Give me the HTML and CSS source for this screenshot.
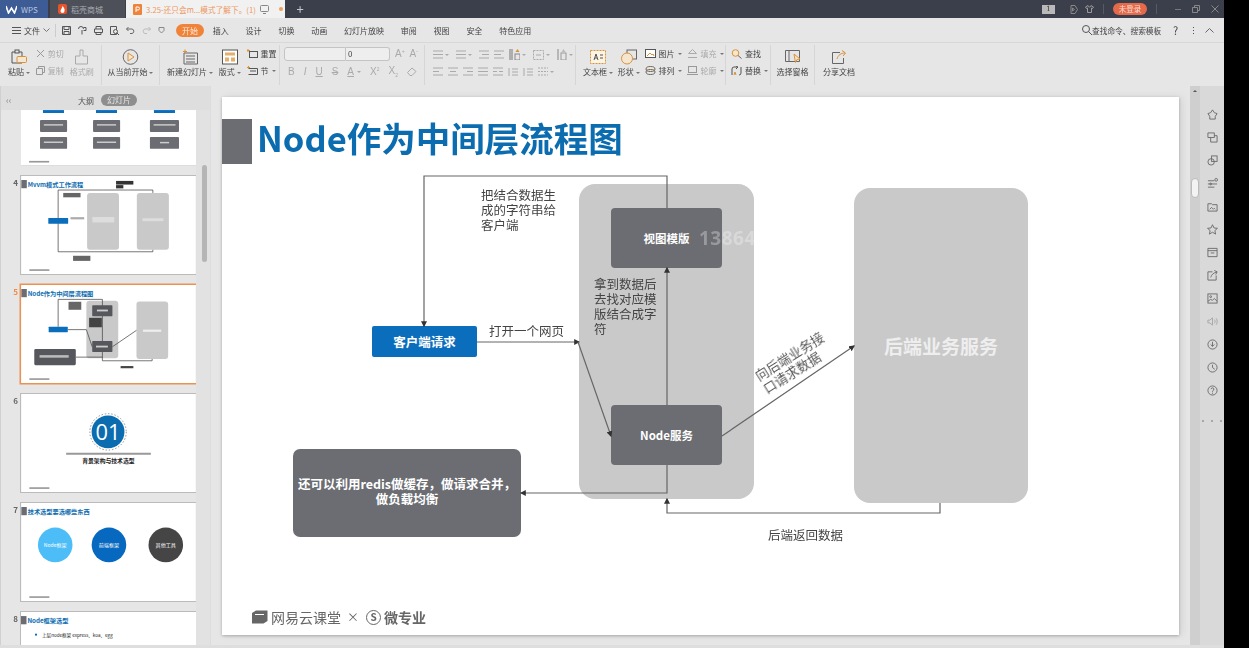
FILE: index.html
```html
<!DOCTYPE html>
<html lang="zh-CN">
<head>
  <meta charset="UTF-8" />
  <title>WPS 演示</title>
  <link rel="stylesheet" href="styles.css">
</head>
<body>
<div class="app">

  <!-- title bar -->
  <header class="titlebar">
    <div class="tab tab-wps">
      <svg width="11" height="9" viewBox="0 0 11 9"><path d="M0 1l2.500 7 3-5 3 5L11 1" fill="none" stroke="#fff" stroke-width="1.600"/></svg>
      <span>WPS</span>
    </div>
    <div class="tab tab-shop">
      <svg width="9" height="10" viewBox="0 0 9 10"><rect width="9" height="10" rx="2" fill="#e8542a"/><path d="M4.500 2C6 4 7 5 6.500 7a2 2 0 0 1-4 0C2.500 5.500 4 4.500 4.500 2z" fill="#fff"/></svg>
      <span>稻壳商城</span>
    </div>
    <div class="tab tab-doc">
      <svg width="9" height="11" viewBox="0 0 9 11"><rect width="9" height="11" rx="1" fill="#f0833a"/><path d="M3 8V3h2a1.300 1.300 0 0 1 0 3H3" fill="none" stroke="#fff"/></svg>
      <span class="doc-name">3.25-还只会m...模式了解下。(1)</span>
      <svg width="9" height="9" viewBox="0 0 9 9"><rect x=".5" y=".5" width="8" height="6" rx="1" fill="none" stroke="#888"/><path d="M3 8.500h3" stroke="#888"/></svg>
      <i class="doc-dot"></i>
    </div>
    <div class="tab-add">+</div>
    <div class="title-right">
      <span class="win-count">1</span>
      <svg class="tr-skin" width="8" height="9" viewBox="0 0 8 9"><path d="M1 .5h4l2.500 4L5 8.500H1zM2.500 3l2 1.500-2 1.500z" fill="none" stroke="#888"/></svg>
      <svg class="tr-shirt" width="9" height="8" viewBox="0 0 9 8"><path d="M3 .5L.5 2l1 1.500 1-.5v4.500h4V3l1 .5L8.500 2 6 .5a1.500 1.500 0 0 1-3 0z" fill="none" stroke="#999"/></svg>
      <i class="tr-sep"></i>
      <span class="login">未登录</span>
      <i class="tr-sep"></i>
      <i class="win-min"></i>
      <svg class="win-max" width="8" height="8" viewBox="0 0 8 8"><path d="M.5 2.500h5v5h-5zM2.500 2.500v-2h5v5h-2" fill="none" stroke="#888"/></svg>
      <svg class="win-close" width="8" height="8" viewBox="0 0 8 8"><path d="M.5.5l7 7M7.500.5l-7 7" stroke="#888"/></svg>
    </div>
  </header>

  <!-- menu bar -->
  <nav class="menubar">
    <div class="file-menu">
      <svg width="9" height="7" viewBox="0 0 9 7"><path d="M0 .5h9M0 3.500h9M0 6.500h9" stroke="#555"/></svg>
      <span>文件</span>
      <svg width="7" height="4" viewBox="0 0 7 4"><path d="M.5.5l3 3 3-3" fill="none" stroke="#777"/></svg>
    </div>
    <div class="quick">
      <svg width="9" height="9" viewBox="0 0 9 9"><path d="M.5.5h8v8h-8zM2 .5v3h5v-3M2 8.500v-3h5v3" fill="none" stroke="#555"/></svg>
      <svg width="9" height="9" viewBox="0 0 9 9"><path d="M.5 3a2.500 2.500 0 0 1 5 0M5.500 1.500h2.500v3H5.500M4 4v4.500" fill="none" stroke="#555"/></svg>
      <svg width="9" height="9" viewBox="0 0 9 9"><path d="M2 3V.5h5V3M.5 3h8v3.500h-8zM2 6v2.500h5V6" fill="none" stroke="#555"/></svg>
      <svg width="9" height="9" viewBox="0 0 9 9"><path d="M.5.5h6v8h-6z" fill="none" stroke="#555"/><circle cx="5.500" cy="5.500" r="2" fill="#e6e6e6" stroke="#555"/><path d="M7 7l2 2" stroke="#555"/></svg>
      <svg width="9" height="8" viewBox="0 0 9 8"><path d="M2.500 1L.5 3l2 2M.5 3H6a2.300 2.300 0 0 1 0 4.500H4" fill="none" stroke="#666"/></svg>
      <svg width="9" height="8" viewBox="0 0 9 8"><path d="M6.500 1l2 2-2 2M8.500 3H3a2.300 2.300 0 0 0 0 4.500h2" fill="none" stroke="#bbb"/></svg>
      <svg width="7" height="7" viewBox="0 0 7 7"><path d="M1 .5h5v3L3.500 6 1 3.500z" fill="none" stroke="#888"/></svg>
    </div>
    <ul class="menu-items">
      <li class="menu-on">开始</li>
      <li>插入</li>
      <li>设计</li>
      <li>切换</li>
      <li>动画</li>
      <li>幻灯片放映</li>
      <li>审阅</li>
      <li>视图</li>
      <li>安全</li>
      <li>特色应用</li>
    </ul>
    <div class="menu-right">
      <svg width="10" height="10" viewBox="0 0 10 10"><circle cx="4" cy="4" r="3.500" fill="none" stroke="#555"/><path d="M6.500 6.500L10 10" stroke="#555"/></svg>
      <span class="cmd-search">查找命令、搜索模板</span>
      <span class="help">?</span>
      <span class="more">⋮</span>
      <svg width="9" height="5" viewBox="0 0 9 5"><path d="M.5 4.500l4-4 4 4" fill="none" stroke="#666"/></svg>
    </div>
  </nav>

  <!-- ribbon -->
  <section class="ribbon">
    <div class="rgroup g-clip">
      <div class="big">
        <svg width="16" height="15" viewBox="0 0 16 15"><path d="M1 2.500h10v11H1z" fill="none" stroke="#555"/><rect x="4" y=".5" width="4" height="3" fill="#e6e6e6" stroke="#555"/><rect x="6" y="7" width="9.500" height="6" rx="1" fill="#f5e6cf" stroke="#d9913c"/></svg>
        <span>粘贴 <b class="caret"></b></span>
      </div>
      <div class="small-col dim">
        <span class="small-row"><svg width="9" height="9" viewBox="0 0 9 9"><path d="M1 1l7 7M8 1L1 8" stroke="#999"/></svg>剪切</span>
        <span class="small-row"><svg width="9" height="9" viewBox="0 0 9 9"><path d="M.5 2.500h6v6h-6zM2.500 2.500v-2h6v6h-2" fill="none" stroke="#999"/></svg>复制</span>
      </div>
      <div class="big dim">
        <svg width="15" height="15" viewBox="0 0 15 15"><path d="M6 .5h3v6h4.500v8h-12v-8H6z" fill="none" stroke="#aaa"/></svg>
        <span>格式刷</span>
      </div>
    </div>

    <div class="rgroup g-play">
      <div class="big">
        <svg width="17" height="16" viewBox="0 0 17 16"><circle cx="8.500" cy="8" r="7.300" fill="none" stroke="#666"/><path d="M6 4l6 4-6 4z" fill="#f5e6cf" stroke="#d9913c"/></svg>
        <span>从当前开始 <b class="caret"></b></span>
      </div>
    </div>

    <div class="rgroup g-slide">
      <div class="big">
        <svg width="16" height="15" viewBox="0 0 16 15"><path d="M2 3.500h13.500v11H2zM4 6.500h9M4 9.500h9M4 12.500h9" fill="none" stroke="#666"/><path d="M3 0v4M1 2h4" stroke="#d9913c"/></svg>
        <span>新建幻灯片 <b class="caret"></b></span>
      </div>
      <div class="big">
        <svg width="16" height="15" viewBox="0 0 16 15"><rect x=".5" y=".5" width="15" height="14" fill="#fff" stroke="#555"/><rect x="3" y="3" width="10" height="3" fill="#e2b06c"/><rect x="3" y="8" width="4" height="4" fill="#e2b06c"/><rect x="9" y="8" width="4" height="4" fill="#e2b06c"/></svg>
        <span>版式 <b class="caret"></b></span>
      </div>
      <div class="small-col">
        <span class="small-row"><svg width="11" height="9" viewBox="0 0 11 9"><rect x="2.500" y="2.500" width="8" height="6" fill="none" stroke="#555"/><path d="M1 0v3M0 1.500h3" stroke="#d9913c"/></svg>重置</span>
        <span class="small-row"><svg width="11" height="9" viewBox="0 0 11 9"><path d="M1.500 2.500h9v6h-9M3 5h6" fill="none" stroke="#555"/><path d="M1.500 0v3M0 1.500h3" stroke="#d9913c"/></svg>节 <b class="caret"></b></span>
      </div>
    </div>

    <div class="rgroup g-font">
      <div class="font-row">
        <span class="fbox f-name"></span><span class="fbox f-size">0</span>
        <span class="font-a">A<sup>+</sup></span><span class="font-a">A<sup>-</sup></span>
      </div>
      <div class="font-row fmt">
        <b>B</b><i>I</i><u>U</u><s>S</s><span class="fmt-a">A</span><b class="caret"></b>
        <span>X<sup>2</sup></span><span>X<sub>2</sub></span>
        <svg width="10" height="9" viewBox="0 0 10 9"><path d="M.5 5.500L5 1l4 3.500-4 4H3z" fill="none" stroke="#aaa"/></svg>
      </div>
    </div>

    <div class="rgroup g-para">
      <div class="para-row">
        <svg width="10" height="9" viewBox="0 0 10 9"><path d="M0 1h10M0 4.500h10M0 8h10" stroke="#aaa"/></svg><b class="caret"></b>
        <svg width="10" height="9" viewBox="0 0 10 9"><path d="M0 1h10M0 4.500h10M0 8h10" stroke="#aaa"/></svg><b class="caret"></b>
        <svg width="10" height="9" viewBox="0 0 10 9"><path d="M0 1h10M3 4.500h7M0 8h10" stroke="#aaa"/></svg>
        <svg width="10" height="9" viewBox="0 0 10 9"><path d="M0 1h10M0 4.500h7M0 8h10" stroke="#aaa"/></svg>
        <svg width="11" height="11" viewBox="0 0 11 11"><path d="M1 0v11M3 0v11" stroke="#777"/><rect x="6" y="5" width="5" height="6" fill="none" stroke="#888"/><path d="M8.500 0l2 3h-4z" fill="#d9913c"/></svg><b class="caret"></b>
        <svg width="11" height="10" viewBox="0 0 11 10"><rect x=".5" y=".5" width="10" height="9" fill="none" stroke="#aaa" stroke-dasharray="2 1"/><path d="M3 5h5" stroke="#aaa"/></svg><b class="caret"></b>
        <svg width="10" height="11" viewBox="0 0 10 11"><path d="M1 0v11" stroke="#888"/><rect x="4" y="4" width="5" height="7" fill="none" stroke="#999"/><path d="M6.500 0l2 3h-4z" fill="#bbb"/></svg><b class="caret"></b>
      </div>
      <div class="para-row">
        <svg width="10" height="9" viewBox="0 0 10 9"><path d="M0 1h10M0 4.500h6M0 8h10" stroke="#aaa"/></svg>
        <svg width="10" height="9" viewBox="0 0 10 9"><path d="M0 1h10M2 4.500h6M0 8h10" stroke="#aaa"/></svg>
        <svg width="10" height="9" viewBox="0 0 10 9"><path d="M0 1h10M4 4.500h6M0 8h10" stroke="#aaa"/></svg>
        <svg width="10" height="9" viewBox="0 0 10 9"><path d="M0 1h10M0 4.500h10M0 8h10" stroke="#aaa"/></svg>
        <svg width="10" height="9" viewBox="0 0 10 9"><path d="M0 1h10M0 4.500h4M6 4.500h4M0 8h10" stroke="#aaa"/></svg>
        <svg width="10" height="10" viewBox="0 0 10 10"><path d="M1 1v8M4 2h6M4 5h6M4 8h6" stroke="#aaa"/></svg>
        <svg width="10" height="10" viewBox="0 0 10 10"><path d="M1 1v8M4 2h6M4 5h6M4 8h6" stroke="#aaa"/></svg>
        <svg width="10" height="9" viewBox="0 0 10 9"><path d="M0 1h10M0 4.500h10M0 8h10" stroke="#aaa" stroke-dasharray="2 1"/></svg><b class="caret"></b>
      </div>
    </div>

    <div class="rgroup g-draw">
      <div class="big">
        <svg width="16" height="14" viewBox="0 0 16 14"><rect x=".5" y=".5" width="15" height="13" fill="#fbf3e3" stroke="#d9913c" stroke-dasharray="2 1"/><path d="M4 10l2-6 2 6M5 8h2M10 5h3M10 8h3" fill="none" stroke="#555"/></svg>
        <span>文本框 <b class="caret"></b></span>
      </div>
      <div class="big">
        <svg width="16" height="15" viewBox="0 0 16 15"><rect x="6" y=".5" width="9.500" height="9" fill="none" stroke="#666"/><circle cx="6" cy="9" r="5.500" fill="#f5e6cf" stroke="#d9913c"/></svg>
        <span>形状 <b class="caret"></b></span>
      </div>
      <div class="small-col">
        <span class="small-row"><svg width="11" height="9" viewBox="0 0 11 9"><rect x=".5" y=".5" width="10" height="8" fill="#fff" stroke="#555"/><path d="M2 7l3-3 2 2 1-1 1 2" fill="none" stroke="#d9913c"/></svg>图片 <b class="caret"></b></span>
        <span class="small-row"><svg width="11" height="9" viewBox="0 0 11 9"><ellipse cx="5.500" cy="3" rx="4.500" ry="2.500" fill="#f5e6cf" stroke="#666"/><ellipse cx="5.500" cy="6" rx="4.500" ry="2.500" fill="none" stroke="#666"/></svg>排列 <b class="caret"></b></span>
      </div>
      <div class="small-col dim">
        <span class="small-row"><svg width="11" height="9" viewBox="0 0 11 9"><path d="M5.500.5l4 4h-8zM1 8.500h9" fill="none" stroke="#aaa"/></svg>填充 <b class="caret"></b></span>
        <span class="small-row"><svg width="11" height="9" viewBox="0 0 11 9"><rect x="1.500" y=".5" width="8" height="6" fill="none" stroke="#999"/><path d="M0 8.500h11" stroke="#999"/></svg>轮廓 <b class="caret"></b></span>
      </div>
    </div>

    <div class="rgroup g-find">
      <div class="small-col">
        <span class="small-row"><svg width="11" height="10" viewBox="0 0 11 10"><circle cx="4.500" cy="4" r="3.300" fill="#f5e6cf" stroke="#d9913c"/><path d="M7 6.500l3.500 3" stroke="#666"/></svg>查找</span>
        <span class="small-row"><svg width="11" height="10" viewBox="0 0 11 10"><path d="M1 9V3a2 2 0 0 1 2-2h3M5 0l2 1-2 2M10 1v6a2 2 0 0 1-2 2" fill="none" stroke="#555"/><path d="M3 9l1-3 1 3" fill="none" stroke="#d9913c"/></svg>替换 <b class="caret"></b></span>
      </div>
    </div>

    <div class="rgroup g-pane">
      <div class="big">
        <svg width="16" height="14" viewBox="0 0 16 14"><path d="M.5.500h14v11H.5zM4 .5v11" fill="none" stroke="#666"/><path d="M9 4l6 5-3 .5-1.500 3z" fill="#f5e6cf" stroke="#d9913c"/></svg>
        <span>选择窗格</span>
      </div>
    </div>

    <div class="rgroup g-share">
      <div class="big">
        <svg width="15" height="14" viewBox="0 0 15 14"><path d="M8 2.500H.5v11h11V8" fill="none" stroke="#666"/><path d="M5 9c1-4 4-6 8-6M10 .5L13.500 3 11 6" fill="none" stroke="#d9913c"/></svg>
        <span>分享文档</span>
      </div>
    </div>
  </section>

  <main class="workspace">

    <!-- slide list -->
    <aside class="sidebar">
      <div class="side-tabs">
        <span class="side-fold">‹‹</span>
        <span class="side-tab">大纲</span>
        <span class="side-tab side-tab-on">幻灯片</span>
      </div>
      <div class="side-body">
        <div class="thumbs">
          <div class="thumb-row">
            <span class="thumb-no"></span>
            <svg class="thumb thumb-cut" viewBox="0 238 957 300">
              <rect y="238" width="957" height="300" fill="#fff"/>
              <g fill="#0a6ebd"><rect x="120" y="238" width="115" height="16"/><rect x="410" y="238" width="115" height="16"/><rect x="727" y="238" width="115" height="16"/></g>
              <g fill="#6b6d72"><rect x="104" y="292" width="148" height="66" rx="5"/><rect x="394" y="292" width="148" height="66" rx="5"/><rect x="705" y="292" width="159" height="66" rx="5"/><rect x="104" y="385" width="148" height="65" rx="5"/><rect x="394" y="385" width="148" height="65" rx="5"/><rect x="705" y="385" width="159" height="65" rx="5"/></g>
              <g fill="#ccc"><rect x="125" y="315" width="105" height="8"/><rect x="415" y="315" width="105" height="8"/><rect x="725" y="315" width="120" height="8"/><rect x="125" y="410" width="105" height="8"/><rect x="415" y="410" width="105" height="8"/><rect x="760" y="412" width="50" height="8"/></g>
              <rect x="44" y="516" width="110" height="9" fill="#999"/>
            </svg>
          </div>
          <div class="thumb-row">
            <span class="thumb-no">4</span>
            <svg class="thumb" viewBox="0 0 957 538">
              <rect width="957" height="538" fill="#fff"/>
              <rect y="22" width="30" height="45" fill="#6b6d72"/>
              <text x="35" y="58" class="t-title">Mvvm模式工作流程</text>
              <rect x="361" y="93" width="175" height="312" rx="16" fill="#c9c9c9"/>
              <rect x="634" y="93" width="176" height="312" rx="16" fill="#c9c9c9"/>
              <path d="M449 77H202V416H722V405M449 77H722V93" fill="none" stroke="#444" stroke-width="4"/>
              <rect x="148" y="230" width="109" height="32" rx="3" fill="#0a6ebd"/>
              <path d="M270 232h75" stroke="#aaa" stroke-width="12"/>
              <rect x="520" y="27" width="95" height="20" fill="#333"/>
              <rect x="520" y="50" width="40" height="18" fill="#333"/>
              <rect x="230" y="93" width="95" height="24" fill="#666"/>
              <rect x="284" y="438" width="95" height="28" fill="#666"/>
              <rect x="44" y="512" width="110" height="9" fill="#999"/>
              <rect x="390" y="225" width="120" height="30" fill="#ddd"/>
              <rect x="665" y="232" width="115" height="16" fill="#ddd"/>
            </svg>
          </div>
          <div class="thumb-row">
            <span class="thumb-no thumb-no-on">5</span>
            <svg class="thumb thumb-on" viewBox="0 0 957 538">
              <rect width="957" height="538" fill="#fff"/>
              <rect y="22" width="30" height="45" fill="#6b6d72"/>
              <text x="35" y="58" class="t-title">Node作为中间层流程图</text>
              <rect x="357" y="87" width="175" height="315" rx="16" fill="#c9c9c9"/>
              <rect x="632" y="91" width="174" height="315" rx="16" fill="#c9c9c9"/>
              <path d="M445 79H202V229M445 79V396M255 245H357L389 339M500 339L632 249M299 396H445V416H718V406" fill="none" stroke="#444" stroke-width="4"/>
              <rect x="389" y="111" width="111" height="60" rx="4" fill="#55575c"/>
              <rect x="389" y="308" width="111" height="60" rx="4" fill="#55575c"/>
              <rect x="150" y="229" width="105" height="31" rx="3" fill="#0a6ebd"/>
              <rect x="71" y="352" width="228" height="88" rx="7" fill="#55575c"/>
              <rect x="259" y="92" width="70" height="44" fill="#666"/>
              <rect x="372" y="180" width="70" height="52" fill="#444"/>
              <rect x="545" y="445" width="70" height="12" fill="#444"/>
              <rect x="100" y="385" width="160" height="14" fill="#bbb"/>
              <rect x="415" y="135" width="60" height="10" fill="#ccc"/>
              <rect x="410" y="333" width="65" height="10" fill="#ccc"/>
              <rect x="668" y="245" width="100" height="12" fill="#eee"/>
              <rect x="44" y="512" width="110" height="9" fill="#999"/>
            </svg>
          </div>
          <div class="thumb-row">
            <span class="thumb-no">6</span>
            <svg class="thumb" viewBox="0 0 957 538">
              <rect width="957" height="538" fill="#fff"/>
              <circle cx="476" cy="208" r="100" fill="none" stroke="#888" stroke-width="5" stroke-dasharray="8 10"/>
              <circle cx="476" cy="208" r="90" fill="#0b6cb0"/>
              <text x="476" y="250" class="t-num">01</text>
              <path d="M246 328H711" stroke="#999" stroke-width="10"/>
              <text x="478" y="378" class="t-sub">背景架构与技术选型</text>
              <rect x="44" y="512" width="110" height="9" fill="#999"/>
            </svg>
          </div>
          <div class="thumb-row">
            <span class="thumb-no">7</span>
            <svg class="thumb" viewBox="0 0 957 538">
              <rect width="957" height="538" fill="#fff"/>
              <rect y="22" width="30" height="45" fill="#6b6d72"/>
              <text x="35" y="58" class="t-title">技术选型要选哪些东西</text>
              <circle cx="186" cy="230" r="95" fill="#4dbdf7"/>
              <circle cx="481" cy="230" r="95" fill="#0668bf"/>
              <circle cx="793" cy="230" r="95" fill="#454545"/>
              <text x="186" y="243" class="t-in">Node框架</text>
              <text x="481" y="243" class="t-in">前端框架</text>
              <text x="793" y="243" class="t-in">其他工具</text>
              <rect x="44" y="512" width="110" height="9" fill="#999"/>
            </svg>
          </div>
          <div class="thumb-row">
            <span class="thumb-no">8</span>
            <svg class="thumb thumb-cut8" viewBox="0 0 957 180">
              <rect width="957" height="180" fill="#fff"/>
              <rect y="22" width="30" height="45" fill="#6b6d72"/>
              <text x="35" y="58" class="t-title">Node框架选型</text>
              <text x="115" y="135" class="t-line">上层node框架 express、koa、egg</text>
              <circle cx="82" cy="124" r="6" fill="#0b6cb0"/>
            </svg>
          </div>
        </div>
        <div class="side-scroll"><i class="side-thumb"></i></div>
      </div>
    </aside>

    <!-- slide canvas -->
    <section class="canvas">
      <article class="slide">
        <div class="slide-mark"></div>
        <h1 class="slide-title">Node作为中间层流程图</h1>

        <div class="node group-box mid-box"></div>
        <div class="node group-box back-box">后端业务服务</div>
        <div class="node dark-box view-box">视图模版</div>
        <div class="node dark-box node-box">Node服务</div>
        <div class="node client-box">客户端请求</div>
        <div class="node dark-box redis-box">还可以利用redis做缓存，做请求合并，<br>做负载均衡</div>

        <svg class="wires" width="957" height="538" viewBox="0 0 957 538">
          <defs>
            <marker id="tip" markerWidth="5" markerHeight="5" refX="4" refY="2.500" orient="auto"><path d="M0 0l5 2.500L0 5z" fill="#333"/></marker>
          </defs>
          <g fill="none" stroke="#666" stroke-width="1.200">
            <path d="M445 111V79H202V229" marker-end="url(#tip)"/>
            <path d="M445 308V171" marker-end="url(#tip)"/>
            <path d="M445 368V396H299" marker-end="url(#tip)"/>
            <path d="M255 245H357" marker-end="url(#tip)"/>
            <path d="M356 245L389 339" marker-end="url(#tip)"/>
            <path d="M500 339L632 249" marker-end="url(#tip)"/>
            <path d="M718 406V416H445V402" marker-end="url(#tip)"/>
          </g>
        </svg>

        <p class="note note-render">把结合数据生<br>成的字符串给<br>客户端</p>
        <p class="note note-open">打开一个网页</p>
        <p class="note note-find">拿到数据后<br>去找对应模<br>版结合成字<br>符</p>
        <p class="note note-back">后端返回数据</p>
        <p class="note note-api">向后端业务接<br>口请求数据</p>
        <span class="watermark">13864</span>

        <footer class="slide-logo">
          <svg width="17" height="14" viewBox="0 0 17 14"><path d="M1 3l4-2.500h11.500V11l-4 2.500H1z" fill="#666"/><path d="M4 4.500h9" stroke="#fff"/></svg>
          <span class="logo-cn">网易云课堂</span>
          <span class="logo-x">×</span>
          <span class="logo-s">S</span>
          <span class="logo-micro">微专业</span>
        </footer>
      </article>
      <div class="canvas-scroll"><i class="canvas-up"></i><i class="canvas-thumb"></i></div>
    </section>

    <!-- right rail -->
    <aside class="rail">
      <svg viewBox="0 0 12 12"><path d="M6 1l2 3 3 1-2 3v3H3V8L1 5l3-1z"/></svg>
      <svg viewBox="0 0 12 12"><path d="M1 1h7v5H1zM4 6v5h7V4H8"/></svg>
      <svg viewBox="0 0 12 12"><rect x="5" y="1" width="6" height="6"/><circle cx="4.500" cy="7.500" r="3.500"/></svg>
      <svg viewBox="0 0 12 12"><path d="M1 3h7M1 6.500h10M1 10h7"/><circle cx="10" cy="2" r="1.500"/><circle cx="4" cy="6.500" r="1"/></svg>
      <svg viewBox="0 0 12 12"><path d="M1 3h4l1 1h5v7H1zM3 9l2-2 2 2 1-1 1 1"/></svg>
      <svg viewBox="0 0 12 12"><path d="M6 .8l1.600 3.500 3.800.4-2.800 2.500.8 3.800L6 9l-3.400 2 .8-3.800L.6 4.700l3.800-.4z"/></svg>
      <svg viewBox="0 0 12 12"><path d="M1 1.500h10v9H1zM1 4h10M4 6.500h4"/></svg>
      <svg viewBox="0 0 12 12"><path d="M6 2H1v9h9V6M4 8c1-3 3-5 7-6M8 .5L11 2 9.500 5"/></svg>
      <svg viewBox="0 0 12 12"><rect x="1" y="1" width="10" height="10"/><circle cx="4" cy="4" r="1"/><path d="M1 9l3-2 2 1 2-2 3 3"/></svg>
      <svg class="rail-dim" viewBox="0 0 12 12"><path d="M1 4.500h2L6 2v8L3 7.500H1zM8 4c1 1 1 3 0 4M10 2.500c1.500 2 1.500 5 0 7"/></svg>
      <svg viewBox="0 0 12 12"><circle cx="6" cy="6" r="5"/><path d="M6 3v5M4 6l2 2 2-2"/></svg>
      <svg viewBox="0 0 12 12"><circle cx="6" cy="6" r="5"/><path d="M6 3v3l2.500 2"/></svg>
      <svg viewBox="0 0 12 12"><circle cx="6" cy="6" r="5"/><path d="M4.500 4.500a1.500 1.500 0 1 1 2 1.500L6 7v1M6 9v1"/></svg>
      <span class="rail-more">···</span>
    </aside>

  </main>
  <div class="statusbar"></div>
</div>
</body>
</html>
```

FILE: styles.css
```css
* {
  margin: 0;
  padding: 0;
  box-sizing: border-box;
}
html, body {
  width: 1249px;
  height: 648px;
  overflow: hidden;
  background: #000;
}
body {
  font-family: "Noto Sans CJK SC", "Liberation Sans", sans-serif;
  color: #444;
}
ul { list-style: none; }
.app {
  width: 1224px;
  height: 648px;
  display: flex;
  flex-direction: column;
  background: #e6e6e6;
  filter: blur(.6px);
}

/* title bar */
.titlebar {
  height: 18px;
  flex: none;
  display: flex;
  align-items: stretch;
  background: #3a3f4b;
  font-size: 8px;
}
.tab {
  display: flex;
  align-items: center;
  gap: 4px;
}
.tab-wps {
  width: 48px;
  padding-left: 6px;
  background: #3d5c96;
  color: #b9c6de;
}
.tab-shop {
  width: 75px;
  margin-left: 2px;
  padding-left: 8px;
  background: #4d5059;
  color: #a9abb1;
}
.tab-doc {
  width: 159px;
  margin-left: 1px;
  padding-left: 7px;
  background: #f1f1f1;
  color: #ee9760;
  font-size: 7.700px;
}
.doc-name { white-space: nowrap; }
.doc-dot {
  width: 4px;
  height: 4px;
  margin-left: 6px;
  border-radius: 50%;
  background: #f0a05a;
}
.tab-add {
  width: 30px;
  text-align: center;
  color: #c5c7cc;
  font-size: 13px;
  line-height: 17px;
}
.title-right {
  margin-left: auto;
  display: flex;
  align-items: center;
  padding-right: 5px;
}
.win-count {
  width: 13px;
  height: 9px;
  background: #b9b9b9;
  color: #333;
  font-family: "DejaVu Serif", serif;
  font-size: 7px;
  line-height: 9px;
  text-align: center;
}
.tr-skin { margin-left: 15px; }
.tr-shirt { margin-left: 7px; }
.tr-sep {
  width: 1px;
  height: 10px;
  margin: 0 9px;
  background: #555a66;
}
.login {
  width: 34px;
  height: 12px;
  border-radius: 6px;
  background: #e46a4a;
  color: #f8ddd3;
  font-size: 7.500px;
  line-height: 12px;
  text-align: center;
}
.win-min {
  width: 6px;
  height: 1px;
  margin-left: 9px;
  background: #777;
}
.win-max { margin-left: 11px; }
.win-close { margin-left: 11px; }

/* menu bar */
.menubar {
  height: 25px;
  flex: none;
  display: flex;
  align-items: center;
  border-bottom: 1px solid #d8d8d8;
  font-size: 8px;
}
.file-menu {
  width: 56px;
  padding-left: 12px;
  display: flex;
  align-items: center;
  gap: 3px;
  border-right: 1px solid #ccc;
  height: 13px;
}
.quick {
  width: 120px;
  padding-left: 6px;
  display: flex;
  align-items: center;
  gap: 7px;
}
.menu-items {
  display: flex;
  align-items: center;
  gap: 16.800px;
}
.menu-on {
  width: 28px;
  height: 13px;
  margin-right: -8px;
  border-radius: 7px;
  background: #f0833a;
  color: #fbe9dc;
  line-height: 13px;
  text-align: center;
}
.menu-right {
  margin-left: auto;
  padding-right: 10px;
  display: flex;
  align-items: center;
}
.cmd-search { width: 70px; white-space: nowrap; font-size: 7.700px; }
.help {
  width: 6px;
  margin-left: 11px;
  font-size: 11px;
}
.more {
  width: 6px;
  margin-left: 10px;
  margin-right: 10px;
  font-size: 9px;
  text-align: center;
}

/* ribbon */
.ribbon {
  height: 43px;
  flex: none;
  display: flex;
  padding-top: 2px;
  font-size: 8px;
}
.rgroup {
  height: 40px;
  display: flex;
  border-right: 1px solid #d6d6d6;
}
.big {
  display: flex;
  flex-direction: column;
  align-items: center;
  white-space: nowrap;
  padding-top: 4px;
  gap: 2px;
  height: 38px;
  justify-content: flex-start;
}
.big > svg { height: 16px; flex: none; }
.big > span { line-height: 10px; }
.small-col {
  display: flex;
  flex-direction: column;
  gap: 6px;
  padding-top: 3px;
}
.small-row {
  display: flex;
  align-items: center;
  gap: 3px;
  height: 11px;
  white-space: nowrap;
}
.dim { color: #aaa; }
.caret {
  display: inline-block;
  width: 0;
  height: 0;
  border: 2px solid transparent;
  border-top-color: #777;
  border-bottom-width: 0;
  vertical-align: middle;
}
.g-clip { width: 102px; padding-left: 8px; gap: 6px; }
.g-play { width: 58px; justify-content: center; }
.g-slide { width: 120px; padding-left: 7px; gap: 6px; }
.g-font { width: 145px; padding: 2px 4px 0 4px; flex-direction: column; gap: 4px; }
.g-para { width: 151px; padding: 4px 0 0 8px; flex-direction: column; gap: 6px; }
.g-draw { width: 150px; padding-left: 7px; gap: 5px; }
.g-find { width: 45px; padding-left: 5px; }
.g-pane { width: 44px; justify-content: center; }
.g-share { width: 48px; justify-content: center; border-right: 0; }
.font-row {
  display: flex;
  align-items: center;
  gap: 0;
}
.fbox {
  height: 14px;
  background: #eee;
  border: 1px solid #c4c4c4;
  font-size: 8px;
  line-height: 12px;
  padding-left: 2px;
}
.f-name { width: 62px; border-radius: 3px 0 0 3px; }
.f-size { width: 44px; border-left: 0; border-radius: 0 3px 3px 0; }
.font-a {
  margin-left: 5px;
  font-size: 10px;
  color: #aaa;
  font-family: "Liberation Sans", sans-serif;
}
.font-a sup { font-size: 5px; }
.fmt {
  gap: 9px;
  padding-left: 4px;
  color: #aaa;
  font-family: "Liberation Sans", sans-serif;
  font-size: 10px;
}
.fmt sup, .fmt sub { font-size: 5px; }
.fmt b { font-weight: 400; }
.fmt .caret { border-top-color: #aaa; margin-left: -6px; }
.fmt-a { text-decoration: underline; }
.para-row {
  display: flex;
  align-items: center;
  gap: 5px;
  height: 11px;
}
.para-row .caret { border-top-color: #aaa; margin-left: -3px; margin-right: 2px; }

/* main area */
.workspace {
  flex: 1;
  min-height: 0;
  display: flex;
}

/* slide list */
.sidebar {
  width: 211px;
  flex: none;
  display: flex;
  flex-direction: column;
  border-right: 1px solid #dcdcdc;
  border-left: 1px solid #d0d0d0;
}
.side-tabs {
  height: 24px;
  flex: none;
  display: flex;
  align-items: center;
  padding-top: 4px;
  background: #dedede;
  font-size: 8px;
}
.side-fold {
  width: 77px;
  padding-left: 5px;
  color: #888;
  font-size: 9px;
}
.side-tab { color: #555; }
.side-tab-on {
  width: 36px;
  height: 12px;
  margin-left: 7px;
  border-radius: 6px;
  background: #8e8e8e;
  color: #e6e6e6;
  line-height: 12px;
  text-align: center;
}
.side-body {
  flex: 1;
  min-height: 0;
  display: flex;
  overflow: hidden;
}
.thumbs {
  flex: 1;
  display: flex;
  flex-direction: column;
  gap: 11px;
}
.thumb-row {
  display: flex;
  align-items: flex-start;
}
.thumb-no {
  width: 20px;
  padding: 1px 3px 0 0;
  flex: none;
  text-align: right;
  font-size: 8px;
  font-weight: 700;
  color: #666;
}
.thumb-no-on { color: #ee8a4a; }
.thumb {
  display: block;
  width: 175px;
  height: 98px;
  flex: none;
  box-shadow: 0 0 0 1px #bbb;
}
.thumb-cut {
  height: 55px;
  box-shadow: 0 1px 0 #ddd;
}
.thumb-cut8 { height: 33px; }
.thumb-on { box-shadow: 0 0 0 1.500px #ec9152; }
.t-title {
  font-size: 34px;
  font-weight: 700;
  fill: #0b6cb0;
}
.t-num {
  font-size: 120px;
  fill: #fff;
  text-anchor: middle;
  font-family: "Open Sans", sans-serif;
}
.t-sub {
  font-size: 32px;
  font-weight: 700;
  fill: #222;
  text-anchor: middle;
}
.t-in {
  font-size: 28px;
  fill: #fff;
  text-anchor: middle;
}
.t-line {
  font-size: 25px;
  fill: #222;
}
.side-scroll {
  width: 14px;
  flex: none;
  background: #e2e2e2;
  padding: 55px 0 0 6px;
}
.side-thumb {
  display: block;
  width: 5px;
  height: 97px;
  border-radius: 3px;
  background: #b5b5b5;
}

/* slide canvas */
.canvas {
  flex: 1;
  position: relative;
  display: flex;
  justify-content: flex-end;
}
.slide {
  position: absolute;
  left: 11px;
  top: 11px;
  width: 957px;
  height: 538px;
  background: #fff;
  box-shadow: 0 1px 3px rgba(0, 0, 0, .25), 3px 0 8px rgba(0, 0, 0, .08);
}
.slide-mark {
  position: absolute;
  left: 0;
  top: 22px;
  width: 30px;
  height: 45px;
  background: #6b6d72;
}
.slide-title {
  position: absolute;
  left: 35px;
  top: 10px;
  font-size: 34.500px;
  line-height: 60px;
  font-weight: 700;
  color: #0b6cb0;
  white-space: nowrap;
}
.node {
  position: absolute;
  display: flex;
  align-items: center;
  justify-content: center;
  text-align: center;
  color: #fff;
  font-weight: 700;
  font-family: "Noto Sans CJK SC", serif;
}
.group-box {
  background: #c9c9c9;
  border-radius: 16px;
}
.dark-box {
  background: #6b6d72;
  border-radius: 4px;
  font-size: 11.500px;
}
.mid-box { left: 357px; top: 87px; width: 175px; height: 315px; }
.back-box {
  left: 632px;
  top: 91px;
  width: 174px;
  height: 315px;
  color: #eee;
  font-size: 19px;
}
.view-box { left: 389px; top: 111px; width: 111px; height: 60px; }
.node-box { left: 389px; top: 308px; width: 111px; height: 60px; }
.client-box {
  left: 150px;
  top: 229px;
  width: 105px;
  height: 31px;
  border-radius: 2px;
  background: #0a6ebd;
  font-size: 12.500px;
}
.redis-box {
  left: 71px;
  top: 352px;
  width: 228px;
  height: 88px;
  border-radius: 7px;
  font-size: 12.500px;
  line-height: 15px;
  padding-bottom: 4px;
  white-space: nowrap;
}
.wires {
  position: absolute;
  left: 0;
  top: 0;
}
.note {
  position: absolute;
  font-size: 12.500px;
  line-height: 15px;
  color: #444;
  white-space: nowrap;
}
.note-render { left: 259px; top: 90px; }
.note-open { left: 267px; top: 226px; }
.note-find { left: 372px; top: 179px; }
.note-back { left: 546px; top: 430px; }
.note-api {
  left: 532px;
  top: 250px;
  width: 78px;
  font-size: 13px;
  line-height: 15px;
  color: #555;
  transform: rotate(-32deg);
}
.watermark {
  position: absolute;
  left: 477px;
  top: 127px;
  font-family: "Open Sans", sans-serif;
  font-size: 19px;
  line-height: 28px;
  font-weight: 700;
  letter-spacing: .5px;
  color: rgba(255, 255, 255, .3);
}
.slide-logo {
  position: absolute;
  left: 29px;
  top: 510px;
  display: flex;
  align-items: center;
  color: #666;
  font-size: 14px;
  line-height: 20px;
}
.slide-logo svg { margin-right: 3px; }
.logo-x { margin: 0 4px 0 6px; font-size: 12px; }
.logo-s {
  width: 15px;
  height: 15px;
  border: 1.500px solid #666;
  border-radius: 50%;
  font-size: 10px;
  line-height: 12px;
  font-weight: 700;
  text-align: center;
  margin: 0 3px;
}
.logo-micro { font-weight: 700; }
.canvas-scroll {
  width: 10px;
  background: #cfcfcf;
  display: flex;
  flex-direction: column;
  align-items: center;
}
.canvas-up {
  width: 0;
  height: 0;
  margin-top: 4px;
  border: 2px solid transparent;
  border-bottom-color: #555;
  border-top-width: 0;
}
.canvas-thumb {
  width: 8px;
  height: 20px;
  margin-top: 86px;
  border-radius: 4px;
  background: #f3f3f3;
  border: 1px solid #bbb;
}

/* right rail */
.rail {
  width: 24px;
  flex: none;
  background: #d9d9d9;
  display: flex;
  flex-direction: column;
  align-items: center;
  gap: 12px;
  padding-top: 23px;
}
.rail svg {
  width: 11px;
  height: 11px;
  flex: none;
  fill: none;
  stroke: #6a6a6a;
  stroke-width: 1;
}
.rail .rail-dim { stroke: #a5a5a5; }
.rail-more {
  margin-top: 7px;
  font-size: 9px;
  color: #999;
  line-height: 12px;
}
.statusbar {
  height: 3px;
  flex: none;
  background: #dedede;
}
```
